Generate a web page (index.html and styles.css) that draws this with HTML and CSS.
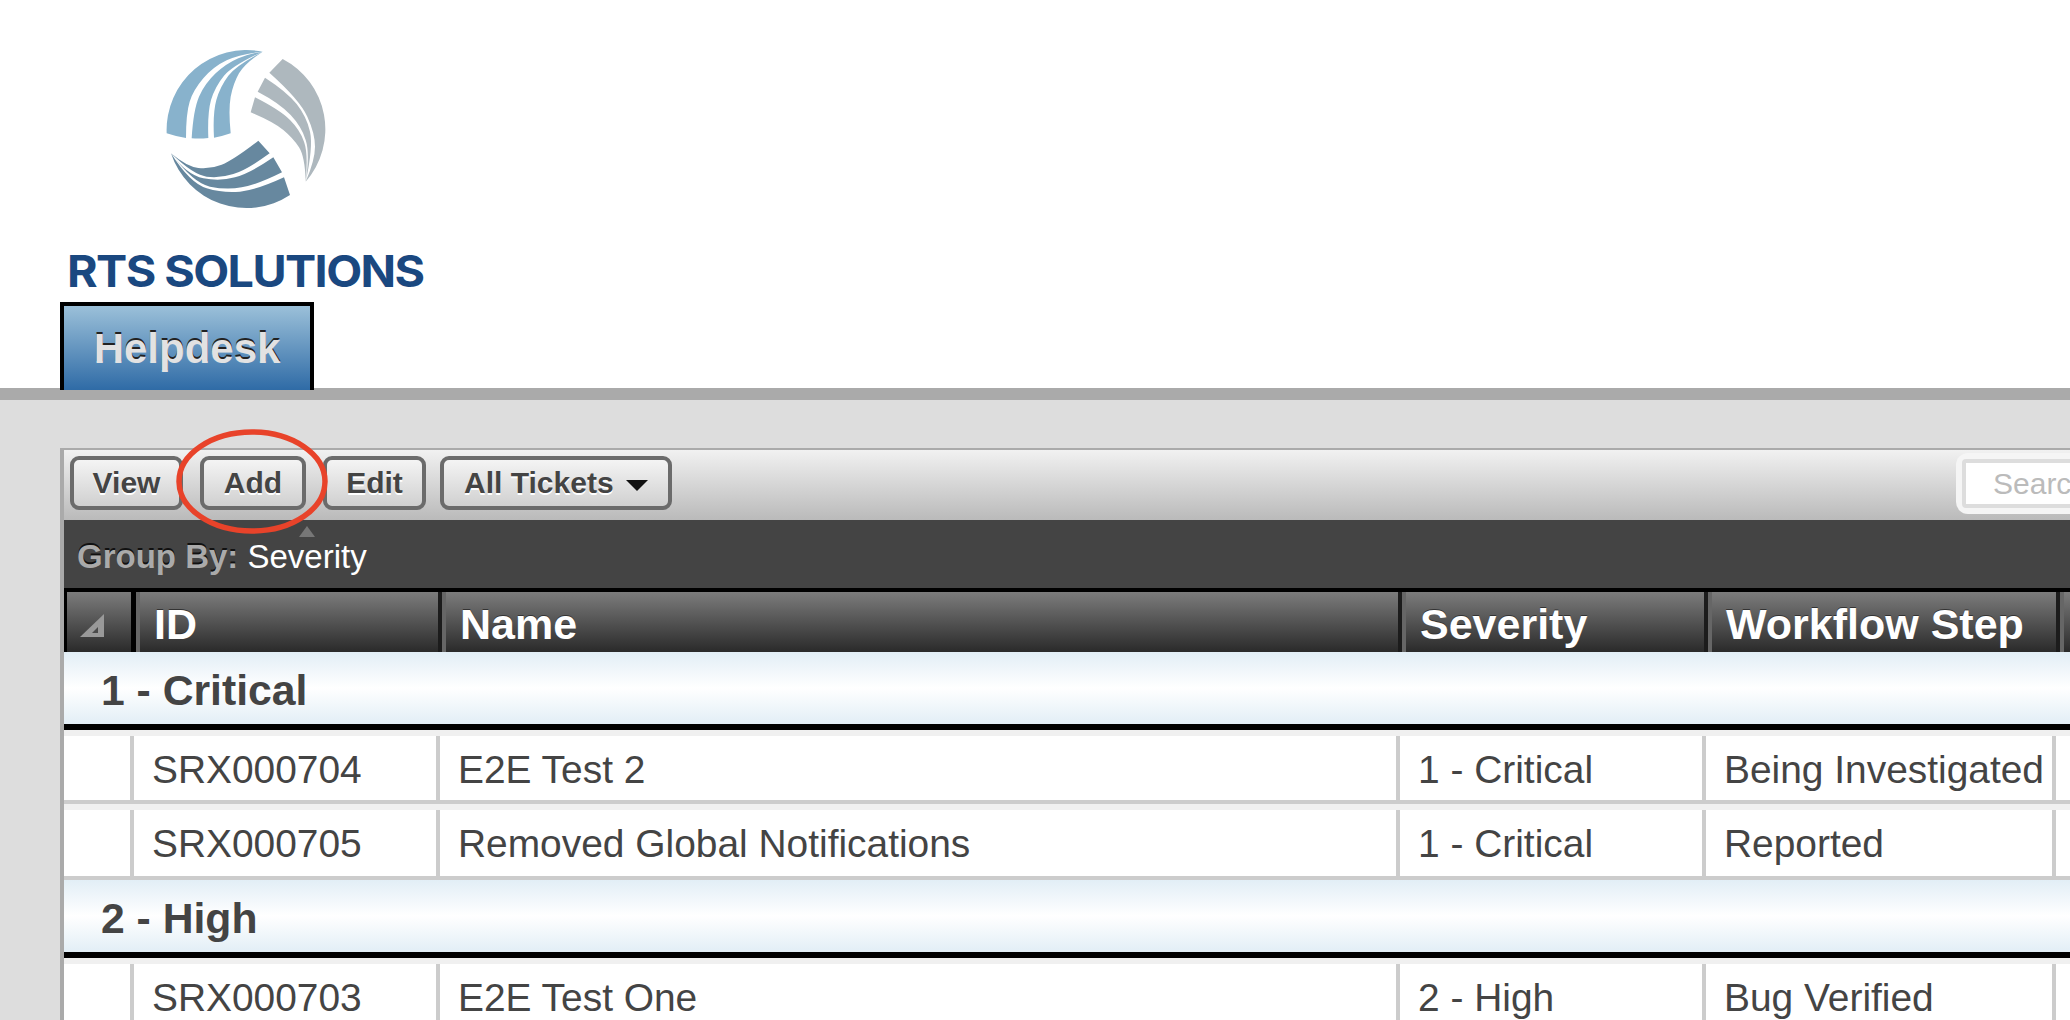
FILE: index.html
```html
<!DOCTYPE html>
<html lang="en">
<head>
<meta charset="utf-8">
<title>Helpdesk</title>
<link rel="stylesheet" href="styles.css">
</head>
<body>
<header class="masthead">
  <svg class="logo-mark" viewBox="0 0 660 510" width="220" height="170" aria-hidden="true">
    <g fill="#88b2cc">
      <path d="M110 250A240 240 0 0 1 398 5Q330 12 290 31Q250 50 220 85Q190 120 179 155Q168 190 168 264Q139 260 110 250Z"/>
      <path d="M185 265Q190 180 207 140Q225 100 257 70Q290 40 325 25Q360 10 398 5Q310 45 282 77Q255 110 243 150Q232 190 235 264Q210 267 185 265Z"/>
      <path d="M252 263Q248 190 259 150Q270 110 295 77Q320 45 398 5Q345 40 327 70Q310 100 302 140Q295 180 302 250Q277 259 252 263Z"/>
    </g>
    <g fill="#aeb8be">
      <path d="M458 27A238 238 0 0 1 527 395Q555 330 555 290Q555 250 532 200Q510 150 418 68Z"/>
      <path d="M405 83Q470 125 500 162Q530 200 540 245Q550 290 527 395Q540 310 527 270Q515 230 482 195Q450 160 383 125Z"/>
      <path d="M375 142Q450 180 480 210Q510 240 522 275Q535 310 527 395Q525 320 507 292Q490 265 460 240Q430 215 362 187Z"/>
    </g>
    <g fill="#67889f">
      <path d="M385 272L419 310Q350 360 310 372Q270 385 230 380Q190 375 123 310Q170 350 205 354Q240 358 275 344Q310 330 385 272Z"/>
      <path d="M430 322L456 367Q380 405 335 412Q290 420 240 410Q190 400 123 310Q170 375 220 385Q270 395 315 382Q360 370 430 322Z"/>
      <path d="M462 382L480 435A238 238 0 0 1 123 310Q180 400 230 415Q280 430 330 425Q380 420 462 382Z"/>
    </g>
  </svg>
  <div class="logo-text">RTS SOLUTIONS</div>
  <nav class="tabs"><a class="tab">Helpdesk</a></nav>
</header>
<div class="rule"></div>
<main class="content">
  <section class="panel">
    <div class="toolbar">
      <button class="btn btn-view">View</button>
      <button class="btn btn-add">Add</button>
      <button class="btn btn-edit">Edit</button>
      <button class="btn btn-menu">All Tickets <span class="caret"></span></button>
      <div class="search"><div class="search-field">Search</div></div>
    </div>
    <div class="groupbar"><b>Group By:</b> <span>Severity</span></div>
    <div class="head-row">
      <div class="hcell hcell-sort"><span class="sort-icon"></span></div>
      <div class="hcell">ID</div>
      <div class="hcell">Name</div>
      <div class="hcell">Severity</div>
      <div class="hcell">Workflow Step</div>
      <div class="hcell"></div>
    </div>
    <div class="group">1 - Critical</div>
    <div class="row">
      <div class="cell"></div><div class="cell">SRX000704</div><div class="cell">E2E Test 2</div><div class="cell">1 - Critical</div><div class="cell">Being Investigated</div><div class="cell"></div>
    </div>
    <div class="row row-last">
      <div class="cell"></div><div class="cell">SRX000705</div><div class="cell">Removed Global Notifications</div><div class="cell">1 - Critical</div><div class="cell">Reported</div><div class="cell"></div>
    </div>
    <div class="group">2 - High</div>
    <div class="row">
      <div class="cell"></div><div class="cell">SRX000703</div><div class="cell">E2E Test One</div><div class="cell">2 - High</div><div class="cell">Bug Verified</div><div class="cell"></div>
    </div>
  </section>
</main>
<span class="grip"></span>
<svg class="callout" viewBox="0 0 152 105" width="152" height="105" aria-hidden="true">
  <ellipse cx="76" cy="52.5" rx="73" ry="49.5" fill="none" stroke="#e8432a" stroke-width="5.5"/>
</svg>
</body>
</html>
```
FILE: styles.css
```css
* { box-sizing: border-box; }
html, body { margin: 0; height: 100%; }
body {
  position: relative;
  width: 2070px;
  height: 1020px;
  overflow: hidden;
  background: #ddd;
  font-family: "Liberation Sans", Arial, sans-serif;
  color: #444;
}
.masthead {
  height: 388px;
  background: #fff;
  padding-top: 50px;
}
.logo-mark { display: block; margin-left: 130px; }
.logo-text {
  margin: 35px 0 0 67px;
  height: 32px;
  line-height: 32px;
  font-family: Inter, sans-serif;
  font-weight: 700;
  font-size: 44px;
  letter-spacing: -1.5px;
  white-space: nowrap;
  color: #1a4880;
  transform: scaleX(1.062);
  transform-origin: left center;
}
.tabs { margin: 15px 0 0 60px; position: relative; z-index: 1; }
.tab {
  display: block;
  width: 254px;
  height: 88px;
  padding-top: 19px;
  border: solid #000;
  border-width: 4px 4px 0;
  background: linear-gradient(#9bc0d9, #2f6ba6);
  color: #e2e2e2;
  font-weight: 700;
  font-size: 42px;
  line-height: 48px;
  text-align: center;
  text-shadow: 0 -2px 0 #222;
}
.rule { height: 12px; background: #aaa; }
.content { padding: 48px 0 0 60px; }
.panel {
  width: 2200px;
  border-left: 4px solid #aaa;
  border-top: 2px solid #aaa;
}
.toolbar {
  display: flex;
  align-items: flex-start;
  height: 70px;
  padding: 6px 0 0 6px;
  background: linear-gradient(#f1f1f1, #bababa);
}
.btn {
  height: 54px;
  padding: 0;
  border: 4px solid #6b6b6b;
  border-radius: 9px;
  background: linear-gradient(#f4f4f4, #d0d0d0);
  font: 700 30px "Liberation Sans", Arial, sans-serif;
  color: #444;
  text-shadow: 0 2px 0 #fff;
}
.btn-view { width: 113px; }
.btn-add { width: 106px; margin-left: 17px; }
.btn-edit { width: 103px; margin-left: 17px; }
.btn-menu { width: 232px; margin-left: 14px; }
.caret {
  display: inline-block;
  margin-left: 4px;
  vertical-align: middle;
  border: solid transparent;
  border-width: 11px 11px 0;
  border-top-color: #111;
}
.search {
  width: 300px;
  height: 61px;
  margin: -3px 0 0 1284px;
  padding: 6px;
  border-radius: 12px;
  background: #f5f5f5;
}
.search-field {
  height: 49px;
  padding-left: 27px;
  border: 4px solid #ddd;
  border-radius: 4px;
  background: #fff;
  color: #bbb;
  font-size: 30px;
  line-height: 41px;
}
.groupbar {
  height: 68px;
  padding-left: 13px;
  background: #444;
  color: #fff;
  font-size: 33px;
  line-height: 74px;
}
.groupbar b { color: #aaa; text-shadow: 0 -2px 0 #111; }
.head-row {
  display: grid;
  grid-template-columns: 72px 306px 960px 306px 352px 204px;
  height: 64px;
  padding-top: 4px;
  background: #000;
}
.hcell {
  position: relative;
  height: 60px;
  padding-left: 14px;
  border-left: 4px solid #666;
  border-right: 4px solid #1c1c1c;
  background: linear-gradient(#7c7c7c, #2a2a2a);
  color: #fff;
  font-weight: 700;
  font-size: 43px;
  line-height: 64px;
  text-shadow: 0 -1px 0 #333;
}
.hcell-sort {
  padding: 0;
  margin-left: 3px;
  border-left: 0;
  border-right: 5px solid #000;
}
.sort-icon {
  position: absolute;
  left: 13px;
  top: 22px;
  width: 0;
  height: 0;
  border-style: solid;
  border-width: 0 0 23px 24px;
  border-color: transparent transparent #999;
}
.sort-icon::after {
  content: "";
  position: absolute;
  left: -12px;
  top: 13px;
  border-style: solid;
  border-width: 0 0 6px 6px;
  border-color: transparent transparent #4a4a4a;
}
.group {
  height: 78px;
  padding: 0 0 6px 37px;
  border-bottom: 6px solid #000;
  background: linear-gradient(#e2eef6, #fff 50%, #e2eef6);
  color: #444;
  font-weight: 700;
  font-size: 42.7px;
  line-height: 76px;
}
.row {
  display: grid;
  grid-template-columns: 70px 306px 960px 306px 350px 208px;
  height: 74px;
  border-top: 6px solid #f0f0f0;
  border-bottom: 4px solid #ccc;
  background: #fff;
}
.row-last { height: 76px; }
.cell {
  padding-left: 18px;
  border-right: 4px solid #ccc;
  font-size: 38.9px;
  line-height: 67px;
  white-space: nowrap;
  color: #444;
}
.grip {
  position: absolute;
  left: 299px;
  top: 526px;
  border: solid transparent;
  border-width: 0 8px 11px;
  border-bottom-color: #777;
}
.callout { position: absolute; left: 176px; top: 429px; }
```
